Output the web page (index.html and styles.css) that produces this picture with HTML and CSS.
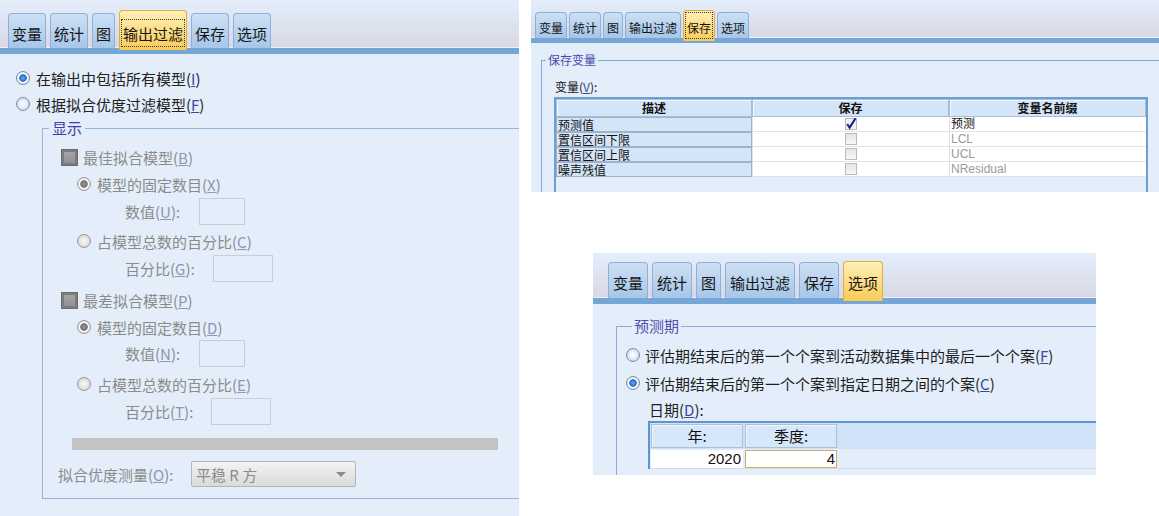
FILE: index.html
```html
<!DOCTYPE html>
<html lang="zh-CN">
<head>
<meta charset="utf-8">
<title>SPSS 专家建模器 选项卡</title>
<link rel="stylesheet" href="styles.css">
</head>
<body>
<div class="page">

  <section class="panel p1">
    <div class="strip">
      <span class="tab">变量</span>
      <span class="tab">统计</span>
      <span class="tab">图</span>
      <span class="tab sel"><span class="focus">输出过滤</span></span>
      <span class="tab">保存</span>
      <span class="tab">选项</span>
    </div>
    <div class="body">
      <div class="opt"><i class="radio on"></i>在输出中包括所有模型(<u class="mn">I</u>)</div>
      <div class="opt"><i class="radio"></i>根据拟合优度过滤模型(<u class="mn">F</u>)</div>
      <fieldset class="grp g1">
        <legend>显示</legend>
        <div class="row cbrow"><i class="cb"></i>最佳拟合模型(<u class="mn">B</u>)</div>
        <div class="row rrow mt1"><i class="radio dis on"></i>模型的固定数目(<u class="mn">X</u>)</div>
        <div class="row frow mt1"><span class="lbl w74">数值(<u class="mn">U</u>):</span><span class="field w46"></span></div>
        <div class="row rrow mt3"><i class="radio dis"></i>占模型总数的百分比(<u class="mn">C</u>)</div>
        <div class="row frow mt1"><span class="lbl w88">百分比(<u class="mn">G</u>):</span><span class="field w60"></span></div>
        <div class="row cbrow mt5"><i class="cb"></i>最差拟合模型(<u class="mn">P</u>)</div>
        <div class="row rrow mt1"><i class="radio dis on"></i>模型的固定数目(<u class="mn">D</u>)</div>
        <div class="row frow"><span class="lbl w74">数值(<u class="mn">N</u>):</span><span class="field w46"></span></div>
        <div class="row rrow mt4"><i class="radio dis"></i>占模型总数的百分比(<u class="mn">E</u>)</div>
        <div class="row frow mt1"><span class="lbl w86">百分比(<u class="mn">T</u>):</span><span class="field w60"></span></div>
        <div class="hbar"></div>
        <div class="row comborow"><span class="lbl w133">拟合优度测量(<u class="mn">O</u>):</span><span class="combo"><span class="ctext">平稳 R 方</span><i class="arrow"></i></span></div>
      </fieldset>
    </div>
  </section>

  <div class="rcol">
    <section class="panel p2">
      <div class="strip">
        <span class="tab">变量</span>
        <span class="tab">统计</span>
        <span class="tab">图</span>
        <span class="tab">输出过滤</span>
        <span class="tab sel"><span class="focus">保存</span></span>
        <span class="tab">选项</span>
      </div>
      <div class="body">
        <fieldset class="grp g2">
          <legend>保存变量</legend>
          <div class="vlabel">变量(<u class="mn">V</u>):</div>
          <div class="tbl">
            <div class="th">描述</div>
            <div class="th">保存</div>
            <div class="th">变量名前缀</div>

            <div class="td1">预测值</div>
            <div class="td c"><svg class="scb" width="12" height="12" viewBox="0 0 12 12"><rect x="0.5" y="0.5" width="11" height="11" fill="#f2f2f2" stroke="#b9b9b9"/><path d="M2.2 6.2 L4.6 9.6 L10.6 0.2" fill="none" stroke="#1d1d8f" stroke-width="2"/></svg></div>
            <div class="td">预测</div>

            <div class="td1">置信区间下限</div>
            <div class="td c"><i class="scb box"></i></div>
            <div class="td gray">LCL</div>

            <div class="td1">置信区间上限</div>
            <div class="td c"><i class="scb box"></i></div>
            <div class="td gray">UCL</div>

            <div class="td1">噪声残值</div>
            <div class="td c"><i class="scb box"></i></div>
            <div class="td gray">NResidual</div>
          </div>
        </fieldset>
      </div>
    </section>

    <section class="panel p3">
      <div class="strip">
        <span class="tab">变量</span>
        <span class="tab">统计</span>
        <span class="tab">图</span>
        <span class="tab">输出过滤</span>
        <span class="tab">保存</span>
        <span class="tab sel">选项</span>
      </div>
      <div class="body">
        <fieldset class="grp g3">
          <legend>预测期</legend>
          <div class="opt"><i class="radio"></i>评估期结束后的第一个个案到活动数据集中的最后一个个案(<u class="mn">F</u>)</div>
          <div class="opt mt2"><i class="radio on"></i>评估期结束后的第一个个案到指定日期之间的个案(<u class="mn">C</u>)</div>
          <div class="dlabel">日期(<u class="mn">D</u>):</div>
          <div class="dtbl">
            <div class="dhead">
              <div class="dth">年:</div>
              <div class="dth">季度:</div>
            </div>
            <div class="drow">
              <div class="dtd">2020</div>
              <div class="dtd edit">4</div>
            </div>
          </div>
        </fieldset>
      </div>
    </section>
  </div>

</div>
</body>
</html>
```

FILE: styles.css
```css
* { box-sizing: border-box; }

body {
  margin: 0;
  background: #ffffff;
  font-family: "Noto Sans CJK SC", "Noto Sans", sans-serif;
  color: #1e1e1e;
}

.page {
  display: flex;
  align-items: flex-start;
}

.rcol {
  display: flex;
  flex-direction: column;
  margin-left: 12px;
}

.panel {
  background: #e3eefa;
  overflow: hidden;
  display: flex;
  flex-direction: column;
  align-items: flex-start;
}

.p1 { width: 519px; height: 516px; font-size: 15px; }
.p2 { width: 628px; height: 192px; font-size: 12px; }
.p3 { width: 503px; height: 222px; margin-top: 61px; margin-left: 62px; font-size: 15px; }

.body {
  flex: none;
  width: 720px;
}

/* ---------- tab strip ---------- */
.strip {
  flex: none;
  align-self: stretch;
  display: flex;
  align-items: flex-end;
  box-sizing: content-box;
  background: linear-gradient(#e4eefb, #d8d7e5);
  box-shadow: inset 0 -1px 0 #eef0f8;
  border-bottom: 6px solid #76a6d5;
}

.tab {
  display: block;
  border: 1px solid #8cb0d8;
  border-bottom: 0;
  border-radius: 4px 4px 0 0;
  background: linear-gradient(#cde0f4, #a6c6e9);
  color: #151515;
  white-space: nowrap;
}

.tab.sel {
  background: linear-gradient(#fff0b8, #f8cb55);
  border-color: #e0ad42;
  position: relative;
}

.focus {
  display: inline-block;
  border: 1px dotted #3a3a3a;
}

/* panel 1 tabs */
.p1 .strip { height: 48px; padding-left: 8px; gap: 4px; }
.p1 .tab { height: 35px; padding: 10px 3px 0; line-height: 20px; }
.p1 .tab.sel { height: 40px; margin-bottom: -2px; padding: 8px 1px 0; }
.p1 .focus { padding: 4px 1px 2px; line-height: 20px; }

/* panel 2 tabs */
.p2 .strip { height: 38px; padding-left: 4px; gap: 2px; border-bottom-width: 5px; }
.p2 .tab { height: 26px; padding: 7px 3px 0; line-height: 16px; }
.p2 .tab.sel { height: 31px; margin-bottom: -3px; padding: 1px 1px 0; }
.p2 .focus { padding: 7px 1px 2px; line-height: 16px; }

/* panel 3 tabs */
.p3 .strip { height: 45px; padding-left: 15px; gap: 4px; }
.p3 .tab { height: 36px; padding: 10px 4px 0; line-height: 20px; }
.p3 .tab.sel { height: 40px; margin-bottom: -3px; padding-top: 11px; }

/* ---------- common controls ---------- */
.mn { color: #3b4a9e; }

.opt {
  display: flex;
  align-items: center;
  height: 26px;
  white-space: nowrap;
}

.radio {
  display: inline-block;
  flex: none;
  width: 14px;
  height: 14px;
  border-radius: 50%;
  border: 1px solid #7f8b9b;
  background: radial-gradient(circle, #fbfdff 0, #eef3fa 3px, #cfdaea 6px);
  margin-right: 6px;
}

.radio.on {
  background: radial-gradient(circle, #6ab0f2 0, #1d67c9 3.4px, #ffffff 4.1px, #f3f6fa 5px, #d6dee9 6px);
}

.radio.dis {
  border-color: #9c9c9c;
  background: radial-gradient(circle, #f5f5f5 0, #ededed 3px, #d5d5d5 6px);
}

.radio.dis.on {
  background: radial-gradient(circle, #9a9a9a 0, #6f6f6f 3.4px, #ffffff 4.1px, #f0f0f0 5px, #d3d3d3 6px);
}

.grp {
  margin: 0;
  padding: 0;
  min-inline-size: 0;
  border: 1px solid #93b6de;
}

.grp legend {
  padding: 0 3px;
}

/* ---------- panel 1 body ---------- */
.p1 .body { padding-top: 11px; }
.p1 .opt { padding-left: 16px; color: #222; }

.g1 {
  margin: 1px 0 0 42px;
  width: 620px;
  padding: 6px 0 11px;
}

.g1 legend {
  margin-left: 6px;
  line-height: 20px;
  color: #3d3da6;
}

.g1 .row {
  display: flex;
  align-items: center;
  height: 26px;
  color: #8b8b8b;
  white-space: nowrap;
}

.g1 .mn { color: #8b97b8; }

.cbrow { padding-left: 18px; }
.rrow { padding-left: 34px; }
.g1 .frow { padding-left: 82px; height: 27px; }
.comborow { padding-left: 15px; margin-top: 11px; }

.mt1 { margin-top: 1px; }
.mt2 { margin-top: 2px; }
.mt3 { margin-top: 3px; }
.mt4 { margin-top: 4px; }
.mt5 { margin-top: 5px; }

.cb {
  display: inline-block;
  flex: none;
  width: 17px;
  height: 17px;
  margin-right: 5px;
  border: 1px solid #6c6c6c;
  background: linear-gradient(#a9a9a9, #8d8d8d);
  box-shadow: inset 0 0 0 2px #7c7c7c;
}

.lbl { display: inline-block; flex: none; }
.w74 { width: 74px; }
.w86 { width: 86px; }
.w88 { width: 88px; }
.w133 { width: 133px; }

.field {
  display: inline-block;
  height: 27px;
  border: 1px solid #c9ced6;
  background: #e4eefa;
}
.w46 { width: 46px; }
.w60 { width: 60px; }

.hbar {
  margin: 13px 0 0 29px;
  width: 426px;
  height: 12px;
  background: #c3c3c3;
}

.combo {
  display: flex;
  align-items: center;
  width: 165px;
  height: 26px;
  border: 1px solid #b4b4b4;
  border-radius: 2px;
  background: linear-gradient(#f3f3f3, #dadada);
  padding-left: 4px;
}

.ctext { color: #8b8b8b; }

.arrow {
  margin-left: auto;
  margin-right: 9px;
  width: 0;
  height: 0;
  border-left: 5px solid transparent;
  border-right: 5px solid transparent;
  border-top: 5px solid #8a8a8a;
}

/* ---------- panel 2 body ---------- */
.p2 .body { padding-left: 10px; }

.g2 {
  margin-top: 9px;
  width: 700px;
  height: 200px;
  padding: 11px 0 0;
  border-color: #7eaad9;
}

.g2 legend {
  margin-left: 4px;
  padding: 0 2px;
  line-height: 16px;
  color: #4848ad;
}

.vlabel {
  padding-left: 13px;
  line-height: 16px;
  height: 16px;
  color: #111;
}

.tbl {
  margin: 2px 0 0 12px;
  width: 594px;
  height: 120px;
  border: 2px solid #6e9fd3;
  border-bottom: 0;
  display: grid;
  grid-template-columns: 196px 197px 197px;
  grid-template-rows: 18px;
  grid-auto-rows: 15px;
  align-content: start;
}

.th {
  background: #d4e5f8;
  border: 1px solid #a7bed9;
  box-shadow: inset 1px 1px 0 #f4f9ff;
  font-weight: bold;
  text-align: center;
  line-height: 16px;
  color: #111;
}

.td1 {
  background: #d5e5f8;
  border: 1px solid #9db3cd;
  line-height: 13px;
  padding-left: 1px;
  color: #111;
}

.td {
  background: #ffffff;
  border-bottom: 1px solid #dde3ea;
  border-left: 1px solid #dde3ea;
  line-height: 14px;
  padding-left: 1px;
  color: #111;
  font-family: "Liberation Sans", "Noto Sans CJK SC", sans-serif;
}

.td.c {
  display: flex;
  align-items: center;
  justify-content: center;
  padding-left: 0;
}

.td.gray { color: #9a9a9a; }

.scb { display: block; }

.scb.box {
  width: 12px;
  height: 12px;
  border: 1px solid #bbbbbb;
  background: linear-gradient(#e4e4e4, #f7f7f7);
}

/* ---------- panel 3 body ---------- */
.g3 {
  margin: 12px 0 0 23px;
  width: 620px;
  height: 260px;
  padding: 6px 0 0 9px;
  border-color: #86afdc;
}

.g3 legend {
  margin-left: 6px;
  padding: 0 2px;
  line-height: 20px;
  color: #5050aa;
}

.g3 .opt { color: #1e1e1e; }
.g3 .radio { margin-right: 5px; }

.dlabel {
  margin-top: 3px;
  padding-left: 23px;
  height: 22px;
  line-height: 22px;
  color: #1e1e1e;
}

.dtbl {
  margin-left: 22px;
  width: 600px;
  border-top: 2px solid #5f94cd;
  border-left: 2px solid #5f94cd;
}

.dhead {
  display: flex;
  gap: 2px;
  height: 26px;
  padding: 1px 0 0 1px;
  background: #cfe2f8;
}

.dth {
  width: 92px;
  height: 24px;
  background: #d6e7f9;
  border: 1px solid #a9c0da;
  box-shadow: inset 1px 1px 0 #f2f8ff;
  text-align: center;
  line-height: 22px;
  color: #111;
}

.drow {
  display: flex;
  gap: 2px;
  height: 20px;
  padding: 1px 0 0 1px;
  border-bottom: 1px solid #d6dce4;
}

.dtd {
  width: 92px;
  height: 18px;
  background: #ffffff;
  text-align: right;
  padding-right: 2px;
  line-height: 18px;
  font-family: "Liberation Sans", "Noto Sans", sans-serif;
  color: #111;
}

.dtd.edit {
  border: 1px solid #cbb06c;
  line-height: 16px;
  padding-right: 1px;
}
```
